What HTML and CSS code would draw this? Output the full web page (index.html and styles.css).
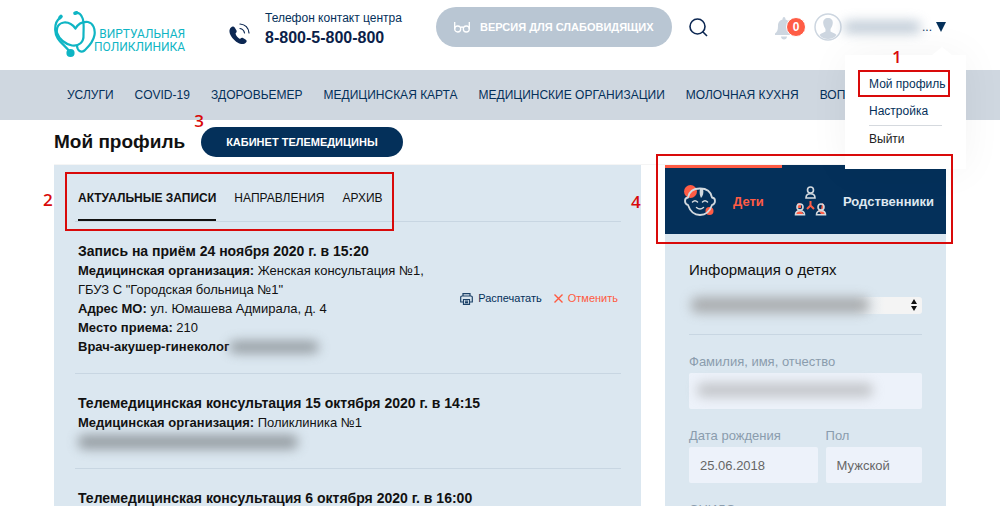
FILE: index.html
```html
<!DOCTYPE html>
<html lang="ru">
<head>
    <meta charset="UTF-8">
    <meta name="viewport" content="width=device-width, initial-scale=1.0">
    <title>Мой профиль</title>
    <link rel="stylesheet" href="styles.css">
</head>
<body>
    <header class="header">
        <a class="logo" href="#">
            <svg class="logo-icon" width="42" height="48" viewBox="54 10 42 48" fill="none" stroke="#0fb5c4" stroke-width="2.2" stroke-linecap="round" stroke-linejoin="round">
                <path d="M60 18C57 20 55 24 55.200 30C55.500 40 63 43 70 52"/>
                <path d="M57 33C56 27 59 23 64 22.500C70 22 73 25 75.500 28.500C78 24 83 21.500 88 22C93 23 95.500 29 94.500 35C93 43 88 47 84.500 50.500C81 53 77.500 51 77 46"/>
                <path d="M57 33C60 41 66 44 72 45.500C79 46.500 84 42 83.500 35C83.500 28 84.500 21 82 17C80.500 13.500 78 12.500 75.500 13"/>
                <path d="M60 17.500L61 16.500M75 13.200L76.500 12.800" stroke-width="3.600"/>
                <circle cx="70.500" cy="53" r="3" fill="#0fb5c4"/>
            </svg>
            <span class="logo-text">ВИРТУАЛЬНАЯ<br>ПОЛИКЛИНИКА</span>
        </a>
        <div class="phone">
            <svg width="21" height="22" viewBox="0 0 21 22" fill="none">
                <path d="M2 4.500C3.500 3 5 3.500 6 5L7.500 7.500C8 8.500 7.500 9.500 6.500 10.500C7 13 9 15 11 16C12 15 13 14.500 14 15L16.500 16.500C18 17.500 18 18.500 17 19.500C15 21.500 12 21.500 8.500 19.500C5 17.500 1 13 .500 9C.300 7 .800 5.500 2 4.500Z" fill="#0c2752"/>
                <path d="M11 5.500C13.500 6 15 7.500 15.500 10M11 1C16 1.500 19.500 5 20 10" stroke="#0c2752" stroke-width="1.200" stroke-linecap="round"/>
            </svg>
            <div>
                <div class="phone-label">Телефон контакт центра</div>
                <a class="phone-number" href="tel:88005800800">8-800-5-800-800</a>
            </div>
        </div>
        <button class="vision-btn" type="button">
            <svg width="16" height="12" viewBox="0 0 16 12" fill="none" stroke="#fff" stroke-width="1.300">
                <path d="M.700 1V8M15.300 1V8M6.700 6.500Q8 5.500 9.300 6.500"/>
                <circle cx="3.700" cy="8" r="3"/>
                <circle cx="12.300" cy="8" r="3"/>
            </svg>
            ВЕРСИЯ ДЛЯ СЛАБОВИДЯЩИХ
        </button>
        <button class="icon-btn" type="button" aria-label="Поиск">
            <svg width="19" height="19" viewBox="0 0 19 19" fill="none" stroke="#0c2752" stroke-width="1.600">
                <circle cx="8.500" cy="8.500" r="7.500"/>
                <path d="M13.500 13.500L18 18"/>
            </svg>
        </button>
        <div class="account">
            <button class="icon-btn bell" type="button" aria-label="Уведомления">
                <svg width="20" height="23" viewBox="0 0 20 23" fill="#cdd6e0">
                    <path d="M10 0C11 0 11.500 1 11.500 2.500C15 3.500 16 6 16 9C16 13 17 15 19 16.500V18H1V16.500C3 15 4 13 4 9C4 6 5 3.500 8.500 2.500C8.500 1 9 0 10 0Z"/>
                    <path d="M7 19.500H13C13 21.500 11.500 22.500 10 22.500S7 21.500 7 19.500Z"/>
                </svg>
                <span class="badge">0</span>
            </button>
            <button class="user-btn" type="button" aria-label="Меню пользователя">
                <svg width="28" height="28" viewBox="0 0 28 28">
                    <circle cx="14" cy="14" r="13" fill="#fff" stroke="#cdd6e0" stroke-width="1.500"/>
                    <path d="M14 5C17 5 19 7 18.800 10C18.500 13 17.500 14.500 16.500 16V18.500C18 19.500 21 20 22.500 22C20 25 17 26 14 26S8 25 5.500 22C7 20 10 19.500 11.500 18.500V16C10.500 14.500 9.500 13 9.200 10C9 7 11 5 14 5Z" fill="#cdd6e0"/>
                </svg>
                <span class="blurred blurred-user"></span>
                <span class="dots">...</span>
                <svg width="10" height="10" viewBox="0 0 10 10"><path d="M0 0H10L5 10Z" fill="#04305a"/></svg>
            </button>
            <div class="menu">
                <a class="menu-item" href="#">Мой профиль<span class="mark mark-profile"><b class="num num-profile">1</b></span></a>
                <a class="menu-item" href="#">Настройка</a>
                <a class="menu-item menu-exit" href="#">Выйти</a>
            </div>
        </div>
    </header>

    <nav class="nav">
        <a href="#">УСЛУГИ</a>
        <a href="#">COVID-19</a>
        <a href="#">ЗДОРОВЬЕМЕР</a>
        <a href="#">МЕДИЦИНСКАЯ КАРТА</a>
        <a href="#">МЕДИЦИНСКИЕ ОРГАНИЗАЦИИ</a>
        <a href="#">МОЛОЧНАЯ КУХНЯ</a>
        <a href="#">ВОПРОСЫ</a>
    </nav>

    <div class="title-row">
        <h1>Мой профиль</h1>
        <button class="cabinet-btn" type="button">КАБИНЕТ ТЕЛЕМЕДИЦИНЫ<b class="num num-cabinet">3</b></button>
    </div>

    <div class="content">
        <main class="records">
            <div class="tabs">
                <button class="tab active" type="button">АКТУАЛЬНЫЕ ЗАПИСИ</button>
                <button class="tab" type="button">НАПРАВЛЕНИЯ</button>
                <button class="tab" type="button">АРХИВ</button>
                <span class="mark mark-tabs"><b class="num num-tabs">2</b></span>
            </div>
            <article class="record">
                <div class="record-info">
                    <h2>Запись на приём 24 ноября 2020 г. в 15:20</h2>
                    <p><b>Медицинская организация:</b> Женская консультация №1,<br>ГБУЗ С "Городская больница №1"</p>
                    <p><b>Адрес МО:</b> ул. Юмашева Адмирала, д. 4</p>
                    <p><b>Место приема:</b> 210</p>
                    <p class="doctor"><b>Врач-акушер-гинеколог</b><span class="blurred blurred-doctor"></span></p>
                </div>
                <div class="record-actions">
                    <button class="action" type="button">
                        <svg width="13" height="12" viewBox="0 0 13 12" fill="none" stroke="#1c4268" stroke-width="1.200">
                            <path d="M3 3V.700H10V3M3 9H.700V4Q.700 3 2 3H11Q12.300 3 12.300 4V9H10"/>
                            <path d="M3.500 6.500H9.500V11.300H3.500ZM5 8.200H8M5 9.700H8"/>
                        </svg>
                        Распечатать
                    </button>
                    <button class="action cancel" type="button">
                        <svg width="9" height="9" viewBox="0 0 9 9" stroke="#ff5a40" stroke-width="1.400"><path d="M.500 .500L8.500 8.500M8.500 .500L.500 8.500"/></svg>
                        Отменить
                    </button>
                </div>
            </article>
            <article class="record">
                <div class="record-info">
                    <h2>Телемедицинская консультация 15 октября 2020 г. в 14:15</h2>
                    <p><b>Медицинская организация:</b> Поликлиника №1</p>
                    <p class="doctor"><span class="blurred blurred-name"></span></p>
                </div>
            </article>
            <article class="record">
                <div class="record-info">
                    <h2>Телемедицинская консультация 6 октября 2020 г. в 16:00</h2>
                </div>
            </article>
        </main>

        <aside class="family">
            <div class="family-tabs">
                <button class="family-tab active" type="button">
                    <svg width="34" height="32" viewBox="0 0 34 32" fill="none">
                        <circle cx="7.500" cy="6.500" r="6.500" fill="#ff5c45"/>
                        <circle cx="26.500" cy="26" r="4" fill="#ff5c45"/>
                        <path d="M17 3.500C24 3.500 28 7 29 12.500C33 13 33 18.500 29 20C27 26 23 30 17 30S7 26 5 20C1 18.500 1 13 5 12.500C6 7 10 3.500 17 3.500Z" stroke="#d3d9df" stroke-width="1.800"/>
                        <path d="M17 4C16 8 17 11 18 13C20 11 21 8 20 4Z" fill="#d3d9df"/>
                        <path d="M9.500 17Q12 14.500 14.500 17M19.500 17Q22 14.500 24.500 17M13.500 22.500Q17 25.500 20.500 22.500" stroke="#d3d9df" stroke-width="1.500" stroke-linecap="round"/>
                    </svg>
                    Дети
                </button>
                <button class="family-tab" type="button">
                    <svg width="33" height="30" viewBox="0 0 33 30" fill="none" stroke="#d3d9df" stroke-width="1.600">
                        <path d="M2 28Q1.500 24 5.500 23.500L9 27V29ZM24 24H29Q31.500 25 31 28H27Z" fill="#ff5c45" stroke="none"/>
                        <path d="M3 18Q5 16 7 18V22H4ZM28 17Q31 18 30 22L27 24Z" fill="#ff5c45" stroke="none"/>
                        <circle cx="16.500" cy="4" r="3"/>
                        <path d="M12 12C12 9 14 7.800 16.500 7.800S21 9 21 12Z"/>
                        <circle cx="6" cy="21" r="3"/>
                        <path d="M1.500 28.800C1.500 26 3.500 24.800 6 24.800S10.500 26 10.500 28.800Z"/>
                        <circle cx="27" cy="21" r="3"/>
                        <path d="M22.500 28.800C22.500 26 24.500 24.800 27 24.800S31.500 26 31.500 28.800Z"/>
                        <path d="M16.500 15V19.500L13 23M16.500 19.500L20 23" stroke="#ff5c45" stroke-width="2"/>
                    </svg>
                    Родственники
                </button>
                <span class="mark mark-family"><b class="num num-family">4</b></span>
            </div>
            <form class="family-form">
                <label class="form-title" for="child">Информация о детях</label>
                <div class="select-row">
                    <select id="child"></select>
                    <svg class="select-arrows" width="6" height="12" viewBox="0 0 6 12"><path d="M0 5L3 0L6 5ZM0 7L3 12L6 7Z" fill="#111"/></svg>
                    <span class="blurred blurred-select"></span>
                </div>
                <div class="field">
                    <label for="fio">Фамилия, имя, отчество</label>
                    <input id="fio" type="text">
                    <span class="blurred blurred-fio"></span>
                </div>
                <div class="field-row">
                    <div class="field field-date">
                        <label for="birth">Дата рождения</label>
                        <input id="birth" type="text" value="25.06.2018">
                    </div>
                    <div class="field field-sex">
                        <label for="sex">Пол</label>
                        <input id="sex" type="text" value="Мужской">
                    </div>
                </div>
                <div class="field">
                    <label for="snils">СНИЛС</label>
                    <input id="snils" type="text">
                </div>
            </form>
        </aside>
    </div>
</body>
</html>
```
FILE: styles.css
```css
* {
    box-sizing: border-box;
}
body {
    margin: 0;
    height: 100vh;
    overflow: hidden;
    background-color: #fff;
    color: #111;
    font-family: "Liberation Sans", Arial, sans-serif;
    font-size: 12px;
}
a {
    color: inherit;
    text-decoration: none;
}
button {
    font: inherit;
    color: inherit;
    background: none;
    border: none;
    padding: 0;
    cursor: pointer;
}
svg {
    display: block;
    flex: none;
}
h1, h2, p {
    margin: 0;
}

/* header */
.header {
    display: flex;
    align-items: flex-start;
    height: 70px;
    padding: 0 54px;
    color: #04305a;
}
.logo {
    display: flex;
    width: 175px;
    padding-top: 10px;
}
.logo-text {
    margin-top: 18px;
    margin-left: -2px;
    color: #0fb5c4;
    font-family: Roboto, sans-serif;
    font-size: 12px;
    line-height: 13px;
    text-align: right;
}
.phone {
    display: flex;
    gap: 15px;
    width: 207px;
    padding-top: 9px;
    white-space: nowrap;
}
.phone svg {
    margin-top: 14px;
}
.phone-label {
    line-height: 18px;
}
.phone-number {
    display: block;
    color: #0c1f4a;
    font-size: 16px;
    font-weight: bold;
    line-height: 22px;
}
.vision-btn {
    display: flex;
    align-items: center;
    gap: 10px;
    height: 40px;
    margin-top: 7px;
    padding: 0 18px;
    border-radius: 20px;
    background-color: #b9c6d3;
    color: #fff;
    font-size: 11px;
    font-weight: bold;
    white-space: nowrap;
}
.icon-btn {
    margin: 18px 0 0 17px;
}
.account {
    position: relative;
    display: flex;
    margin-left: auto;
}
.bell {
    position: relative;
    margin: 16px 20px 0 0;
}
.badge {
    position: absolute;
    left: 12px;
    top: 1px;
    width: 20px;
    height: 20px;
    border: 1px solid #fff;
    border-radius: 50%;
    background-color: #ff5c45;
    color: #fff;
    font-weight: bold;
    line-height: 18px;
}
.user-btn {
    display: flex;
    align-items: center;
    height: 28px;
    margin-top: 13px;
}
.dots {
    margin-right: 4px;
}
.menu {
    position: absolute;
    z-index: 2;
    top: 55px;
    right: -20px;
    width: 121px;
    padding: 16px 24px;
    background-color: #fff;
    box-shadow: 0 0 40px rgba(0, 0, 0, 0.05);
}
.menu::before {
    content: "";
    position: absolute;
    top: -8px;
    right: 14px;
    border: 10px solid transparent;
    border-top: none;
    border-bottom: 8px solid #fff;
}
.menu-item {
    position: relative;
    display: block;
    line-height: 27px;
    white-space: nowrap;
}
.menu-exit {
    border-top: 1px solid #d5d9de;
    color: #222;
}

/* navigation */
.nav {
    display: flex;
    align-items: center;
    gap: 21px;
    height: 50px;
    padding: 0 67px;
    background-color: #cfd7e0;
    color: #04305a;
    white-space: nowrap;
    overflow: hidden;
}
.title-row {
    display: flex;
    align-items: center;
    gap: 16px;
    height: 45px;
    margin: 0 54px;
    border-bottom: 1px solid #f5f5f5;
}
h1 {
    font-size: 19px;
}
.cabinet-btn {
    position: relative;
    height: 30px;
    padding: 0 25px;
    border-radius: 15px;
    background-color: #04305a;
    color: #fff;
    font-size: 11px;
    font-weight: bold;
}

/* records */
.content {
    display: flex;
    align-items: flex-start;
    gap: 24px;
    padding: 0 54px;
}
.records {
    flex: 1;
    padding: 0 20px 24px 21px;
    background-color: #dbe7f0;
}
.tabs {
    position: relative;
    display: flex;
    gap: 18px;
    height: 57px;
    padding-left: 3px;
    border-bottom: 1px solid #c8d6e2;
}
.tab {
    padding-top: 12px;
    border-bottom: 2px solid transparent;
}
.tab.active {
    border-bottom-color: #111;
    font-weight: bold;
}
.record {
    display: flex;
    align-items: center;
    justify-content: space-between;
    padding: 19px 3px 17px;
    border-bottom: 1px solid #c8d6e2;
    font-size: 13px;
    line-height: 19px;
}
.record h2 {
    font-size: 14px;
    line-height: 20px;
}
.doctor {
    display: flex;
    align-items: center;
    height: 19px;
}
.record-actions {
    display: flex;
    gap: 12px;
    color: #04305a;
    font-size: 11px;
}
.action {
    display: flex;
    align-items: center;
    gap: 5px;
}
.cancel {
    color: #ff5a40;
}

/* family panel */
.family {
    width: 281px;
    height: 420px;
    background-color: #dbe7f0;
}
.family-tabs {
    position: relative;
    display: flex;
    height: 69px;
    background-color: #04305a;
    color: #dfe8f0;
    font-size: 13px;
    font-weight: bold;
}
.family-tab {
    display: flex;
    flex: 1;
    align-items: center;
    gap: 16px;
    padding-left: 12px;
    border-top: 3px solid #04305a;
}
.family-tab.active {
    flex: none;
    width: 117px;
    padding-left: 18px;
    border-top-color: #ff5c45;
    color: #ff5c45;
}
.family-form {
    padding: 24px;
}
.form-title {
    display: block;
    font-size: 15px;
    line-height: 24px;
}
.select-row {
    position: relative;
    padding: 15px 0 20px;
    border-bottom: 1px solid #c8d6e2;
}
.select-row select {
    display: block;
    width: 100%;
    height: 17px;
    border: none;
    border-radius: 3px;
    background: linear-gradient(90deg, transparent 70%, #f4f4f4 84%);
    appearance: none;
}
.select-arrows {
    position: absolute;
    top: 17px;
    right: 5px;
}
.field {
    position: relative;
    padding-top: 16px;
}
.field label {
    display: block;
    color: #8a9cad;
    font-size: 13px;
    line-height: 22px;
}
.field input {
    width: 100%;
    height: 36px;
    padding: 0 11px;
    border: none;
    border-radius: 2px;
    background-color: #edf2fa;
    color: #666;
    font: inherit;
    font-size: 13px;
}
.field-row {
    display: flex;
    gap: 8px;
}
.field-date {
    flex: 4;
}
.field-sex {
    flex: 3;
}

/* hidden personal data */
.blurred {
    display: block;
    height: 12px;
    border-radius: 6px;
    background-color: #7c8286;
    filter: blur(6px);
    opacity: 0.75;
}
.blurred-user {
    width: 78px;
    margin: 0 1px;
    background-color: #a8b8c8;
}
.blurred-doctor {
    width: 90px;
}
.blurred-name {
    width: 220px;
    height: 14px;
}
.blurred-select {
    position: absolute;
    top: 15px;
    left: 2px;
    width: 178px;
    height: 16px;
    background-color: #999;
}
.blurred-fio {
    position: absolute;
    top: 48px;
    left: 8px;
    width: 176px;
    height: 14px;
    background-color: #999;
    opacity: 0.5;
}

/* red frames with numbers */
.mark {
    position: absolute;
    z-index: 3;
    border: 2px solid #d90a0a;
    pointer-events: none;
}
.num {
    position: absolute;
    color: #d90a0a;
    font-family: "Open Sans", sans-serif;
    font-size: 17px;
    font-weight: 600;
    line-height: 18px;
}
.mark-profile {
    inset: -1px -8px 1px -11px;
}
.num-profile {
    left: 32px;
    top: -24px;
}
.num-cabinet {
    left: -7px;
    top: -15px;
}
.mark-tabs {
    top: 7px;
    bottom: -10px;
    left: -10px;
    width: 329px;
}
.num-tabs {
    left: -24px;
    top: 17px;
}
.mark-family {
    inset: -11px -7px -10px -9px;
}
.num-family {
    left: -27px;
    top: 37px;
}
```
